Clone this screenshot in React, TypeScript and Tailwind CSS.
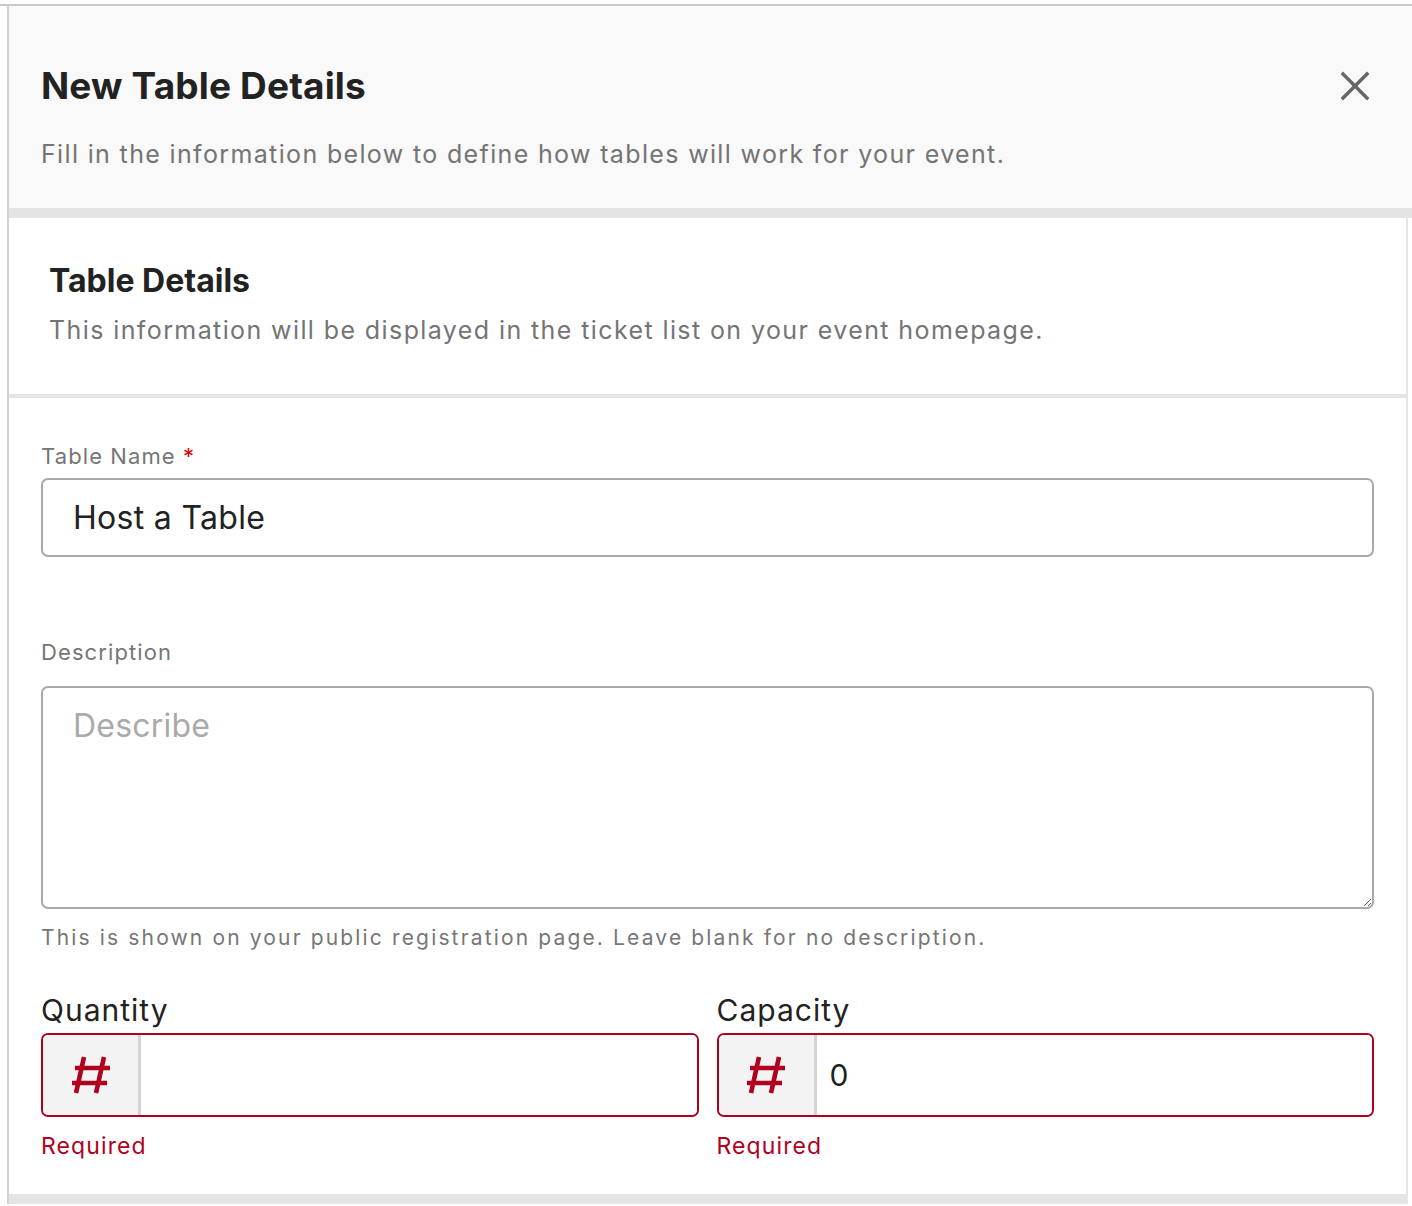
import { FC } from "react";

const HashIcon: FC = () => (
	<svg width="40" height="40" viewBox="0 0 40 40" fill="none" stroke="#b0001e" strokeWidth="4.6" strokeLinecap="butt">
		<path d="M13 2 L5 38" />
		<path d="M33 2 L25 38" />
		<path d="M4 13 L39 13" />
		<path d="M1 28 L36 28" />
	</svg>
);

const CloseIcon: FC = () => (
	<svg width="30" height="30" viewBox="0 0 30 30" fill="none" stroke="#666666" strokeWidth="3.4" strokeLinecap="square">
		<path d="M3 3 L27 27" />
		<path d="M27 3 L3 27" />
	</svg>
);

interface numberFieldProps {
	label: string;
	value: string;
}

const NumberField: FC<numberFieldProps> = ({ label, value }) => {
	return (
		<div className="flex flex-col">
			<label className="text-[30px] leading-[36px] tracking-[1px] text-[#222222]">{label}</label>
			<div className="mt-[5px] flex h-[84px] rounded-[7px] border-2 border-[#b0001e] overflow-hidden">
				<div className="w-[98px] flex items-center justify-center bg-[#f3f3f3] border-r-[3px] border-[#d4d4d4]">
					<HashIcon />
				</div>
				<input
					readOnly
					value={value}
					className="flex-1 min-w-0 pl-[13px] text-[30px] text-[#222222] outline-none bg-white"
				/>
			</div>
			<span className="mt-[15px] text-[23px] leading-[28px] tracking-[1.1px] text-[#b0001e]">Required</span>
		</div>
	);
};

const App: FC = () => {
	return (
		<div className="min-h-[1206px] bg-white pt-[4px] font-['Inter',sans-serif]">
			<div className="border-t-2 border-[#c9c9c9]">
				<div className="ml-[7px] border-l-2 border-[#d2d2d2]">
					<header className="h-[202px] bg-[#f9f9f9] pl-[32px] pr-[42px] pt-[58px]">
						<div className="flex items-start justify-between">
							<h1 className="text-[37px] leading-[44px] font-bold tracking-[0.15px] text-[#222222]">New Table Details</h1>
							<button className="mt-[7px]">
								<CloseIcon />
							</button>
						</div>
						<p className="mt-[30px] text-[25px] leading-[32px] tracking-[1.35px] text-[#747474]">
							Fill in the information below to define how tables will work for your event.
						</p>
					</header>
					<div className="h-[10px] bg-[#e4e4e4]" />
					<div className="w-[1399px] border-r-2 border-[#e6e6e6]">
						<section className="pl-[40px] pt-[44px] pb-[48px]">
							<h2 className="text-[32px] leading-[38px] font-bold text-[#222222]">Table Details</h2>
							<p className="mt-[14px] text-[25px] leading-[32px] tracking-[1.4px] text-[#747474]">
								This information will be displayed in the ticket list on your event homepage.
							</p>
						</section>
						<div className="h-[4px] bg-[#e4e4e4]" />
						<form className="pl-[32px] pr-[32px] pt-[46px] pb-[34px]">
							<label className="block text-[22px] leading-[24px] tracking-[1.1px] text-[#767676]">
								Table Name <span className="text-[#e60000]">*</span>
							</label>
							<input
								readOnly
								value="Host a Table"
								className="mt-[10px] block w-full h-[79px] rounded-[7px] border-2 border-[#a9a9a9] pl-[30px] text-[32px] tracking-[0.3px] text-[#222222] outline-none"
							/>
							<label className="mt-[83px] block text-[22px] leading-[24px] tracking-[1.1px] text-[#767676]">Description</label>
							<textarea
								placeholder="Describe"
								className="mt-[22px] block w-full h-[223px] rounded-[7px] border-2 border-[#a9a9a9] px-[30px] pt-[20px] text-[32px] leading-[36px] tracking-[0.2px] text-[#222222] placeholder:text-[#aaaaaa] outline-none"
							/>
							<p className="mt-[17px] text-[21px] leading-[24px] tracking-[2.15px] text-[#767676]">
								This is shown on your public registration page. Leave blank for no description.
							</p>
							<div className="mt-[42px] grid grid-cols-2 gap-x-[18px]">
								<NumberField label="Quantity" value="" />
								<NumberField label="Capacity" value="0" />
							</div>
						</form>
						<div className="h-[10px] bg-[#e4e4e4]" />
					</div>
				</div>
			</div>
		</div>
	);
};

export default App;
